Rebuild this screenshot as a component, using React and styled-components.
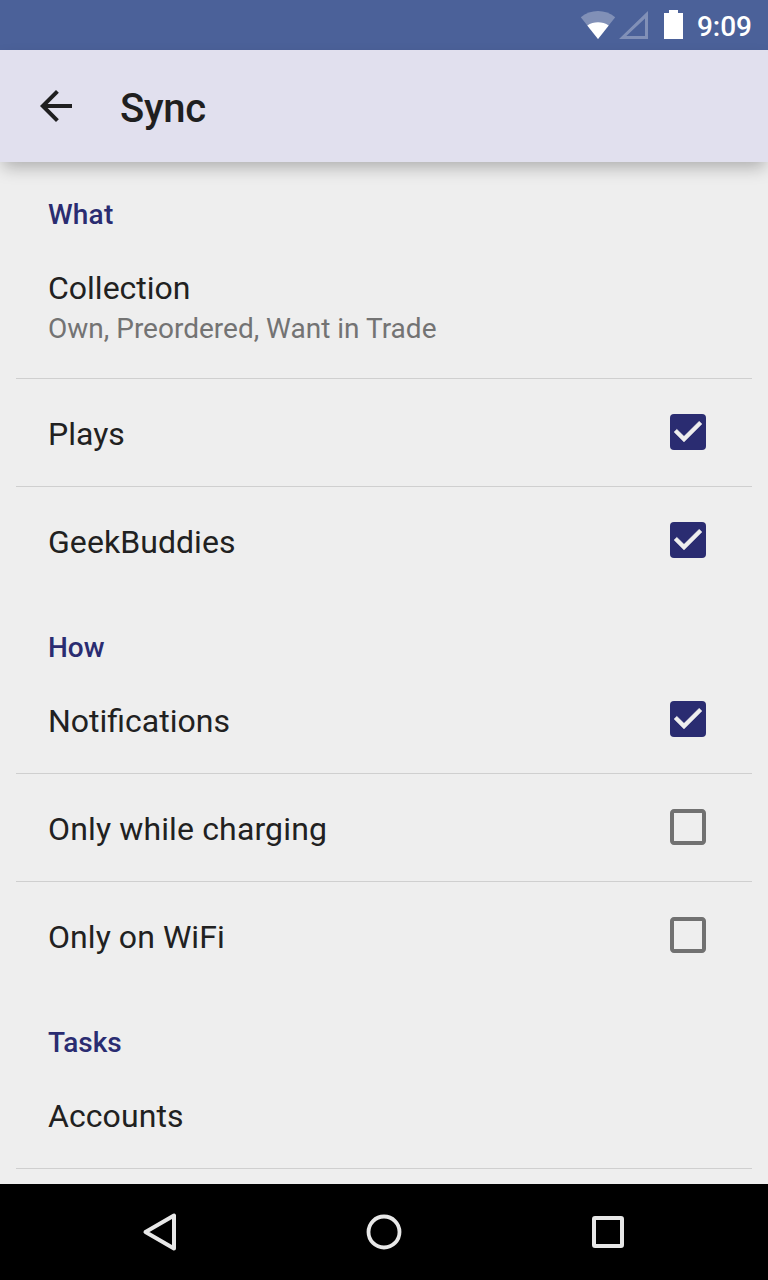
import React from "react";
import styled, { createGlobalStyle } from "styled-components";

const Global = createGlobalStyle`
  * { box-sizing: border-box; }
  html, body { margin: 0; padding: 0; }
  body { font-family: Roboto, sans-serif; background: #eeeeee; }
`;

const Screen = styled.div`
  width: 768px;
  height: 1280px;
  display: flex;
  flex-direction: column;
  overflow: hidden;
  background: #eeeeee;
`;

const StatusBar = styled.header`
  flex: none;
  height: 50px;
  display: flex;
  justify-content: flex-end;
  padding-right: 16px;
  background: #4b6199;
`;

const StatusIcons = styled.svg`
  width: 108px;
  height: 50px;
  margin-right: 9px;
`;

const Clock = styled.span`
  color: #ffffff;
  font-size: 28px;
  font-weight: 500;
  line-height: 53px;
`;

const Toolbar = styled.div`
  flex: none;
  height: 112px;
  display: flex;
  align-items: center;
  padding-left: 32px;
  gap: 40px;
  background: #e1e0ee;
  z-index: 1;
  box-shadow: 0 8px 16px -3px rgba(0, 0, 0, 0.28);
`;

const Title = styled.h1`
  margin: 0;
  padding-top: 6px;
  color: #1f1f20;
  font-size: 40px;
  font-weight: 500;
  line-height: 48px;
  letter-spacing: -0.25px;
`;

const List = styled.main`
  flex: 1;
  min-height: 0;
  overflow: hidden;
  padding: 0 16px;
`;

const SectionHeader = styled.h2`
  margin: 0;
  height: ${(p) => (p.$first ? 71 : 72)}px;
  padding: ${(p) => (p.$first ? 36 : 37)}px 32px 0;
  color: #2a2c71;
  font-size: 28px;
  font-weight: 500;
  line-height: 33px;
  letter-spacing: ${(p) => (p.$first ? "0.2px" : "normal")};
`;

const Row = styled.div`
  height: ${(p) => (p.$tall ? 146 : p.$last ? 107 : 108)}px;
  display: flex;
  align-items: center;
  justify-content: space-between;
  padding: 0 40px 0 32px;
  border-bottom: ${(p) => (p.$last ? "none" : "1px solid #cfcfcf")};
`;

const RowText = styled.div`
  padding-top: ${(p) => (p.$tall ? 2 : 3)}px;
`;

const RowTitle = styled.div`
  color: #212121;
  font-size: 32px;
  line-height: 38px;
  letter-spacing: ${(p) => (p.$tracking ? `${p.$tracking}px` : "normal")};
`;

const RowSummary = styled.div`
  padding-top: 5px;
  color: #737373;
  font-size: 28px;
  line-height: 33px;
`;

const Icon = styled.svg`
  flex: none;
  width: 48px;
  height: 48px;
  display: block;
`;

const CheckIcon = styled(Icon)`
  margin-bottom: 2px;
`;

const NavBar = styled.nav`
  flex: none;
  height: 96px;
  display: flex;
  justify-content: center;
  align-items: center;
  gap: 176px;
  background: #000000;
`;

function Checkbox({ checked }) {
  return (
    <CheckIcon viewBox="0 0 24 24">
      {checked ? (
        <>
          <rect x="3" y="3" width="18" height="18" rx="2" fill="#2a2c71" />
          <path d="M10 17l-5-5 1.41-1.41L10 14.17l7.59-7.59L19 8l-9 9z" fill="#eeeeee" stroke="#eeeeee" strokeWidth="0.2" />
        </>
      ) : (
        <path
          d="M19 5v14H5V5h14m0-2H5c-1.1 0-2 .9-2 2v14c0 1.1.9 2 2 2h14c1.1 0 2-.9 2-2V5c0-1.1-.9-2-2-2z"
          fill="#717171"
        />
      )}
    </CheckIcon>
  );
}

function Preference({ title, summary, checked, last, tracking }) {
  const tall = Boolean(summary);
  return (
    <Row $tall={tall} $last={last}>
      <RowText $tall={tall}>
        <RowTitle $tracking={tracking}>{title}</RowTitle>
        {summary && <RowSummary>{summary}</RowSummary>}
      </RowText>
      {checked !== undefined && <Checkbox checked={checked} />}
    </Row>
  );
}

const sections = [
  {
    name: "What",
    items: [
      { title: "Collection", summary: "Own, Preordered, Want in Trade" },
      { title: "Plays", checked: true },
      { title: "GeekBuddies", checked: true, last: true, tracking: 0.06 },
    ],
  },
  {
    name: "How",
    items: [
      { title: "Notifications", checked: true },
      { title: "Only while charging", checked: false, tracking: 0.14 },
      { title: "Only on WiFi", checked: false, last: true, tracking: 0.06 },
    ],
  },
  { name: "Tasks", items: [{ title: "Accounts", tracking: 0.08 }] },
];

export default function App() {
  return (
    <Screen>
      <Global />
      <StatusBar>
        <StatusIcons viewBox="580 0 108 50">
          <path d="M580.8 17.3C590.5 9 605.5 9 615.2 17.3L598 39z" fill="#fff" fillOpacity=".3" />
          <path d="M587.3 25.4C593.5 21.2 602.5 21.2 608.7 25.4L598 39z" fill="#fff" />
          <path d="M648 11v28h-29zM645 18.4L626.3 36H645z" fill="#fff" fillOpacity=".3" fillRule="evenodd" />
          <path d="M669 10h9v3h5v26h-19V13h5z" fill="#fff" />
        </StatusIcons>
        <Clock>9:09</Clock>
      </StatusBar>
      <Toolbar>
        <Icon viewBox="0 0 24 24">
          <path d="M20 11H7.83l5.59-5.59L12 4l-8 8 8 8 1.41-1.41L7.83 13H20v-2z" fill="#1f1f20" />
        </Icon>
        <Title>Sync</Title>
      </Toolbar>
      <List>
        {sections.map((section, i) => (
          <section key={section.name}>
            <SectionHeader $first={i === 0}>{section.name}</SectionHeader>
            {section.items.map((item) => (
              <Preference key={item.title} {...item} />
            ))}
          </section>
        ))}
      </List>
      <NavBar>
        <Icon viewBox="0 0 48 48">
          <path d="M9.5 24L38 7.5v33z" fill="none" stroke="#e8e8e8" strokeWidth="4" strokeLinejoin="round" />
        </Icon>
        <Icon viewBox="0 0 48 48">
          <circle cx="24" cy="24" r="15.5" fill="none" stroke="#e8e8e8" strokeWidth="3.8" />
        </Icon>
        <Icon viewBox="0 0 48 48">
          <path d="M11 8h26a3 3 0 0 1 3 3v26a3 3 0 0 1-3 3H11a3 3 0 0 1-3-3V11a3 3 0 0 1 3-3zM12 12v24h24V12z" fill="#e8e8e8" fillRule="evenodd" />
        </Icon>
      </NavBar>
    </Screen>
  );
}
